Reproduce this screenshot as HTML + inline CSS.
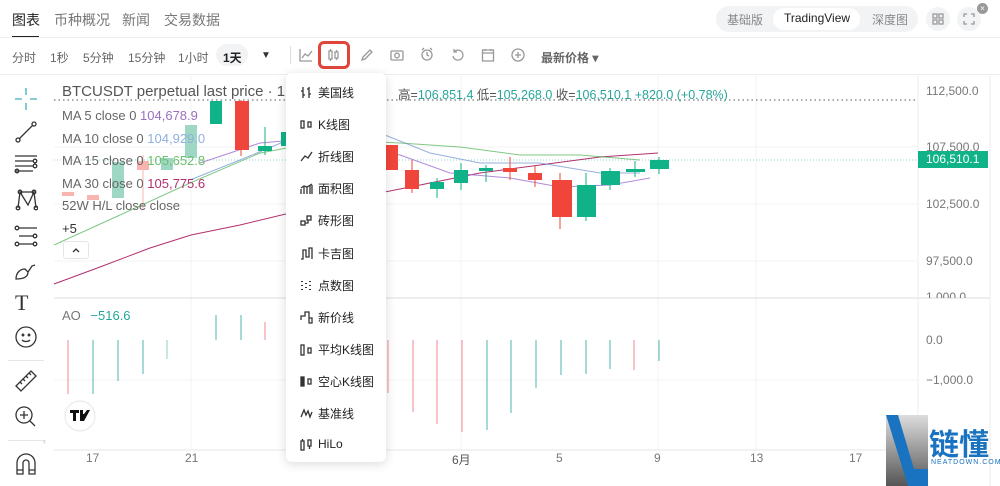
<!DOCTYPE html>
<html><head><meta charset="utf-8"><style>
*{margin:0;padding:0;box-sizing:border-box}
body{width:1000px;height:486px;overflow:hidden;background:#fff;font-family:"Liberation Sans","Noto Sans CJK SC",sans-serif;position:relative;color:#333}
.a{position:absolute;white-space:nowrap}
.tab{font-size:14px;color:#777;top:10px}
.tf{font-size:12px;color:#666;top:49px}
.lg{font-size:13px;color:#666}
.menu{position:absolute;left:286px;top:73px;width:100px;height:389px;background:#fff;border-radius:6px;box-shadow:0 2px 10px rgba(0,0,0,.15)}
.mi{position:absolute;left:14px;font-size:12px;color:#222;display:flex;align-items:center}
.mi svg{margin-right:5px}
.ax{font-size:12px;color:#777}
svg.i{position:absolute;fill:none;stroke:#333;stroke-width:1.3}
svg.t{position:absolute;fill:none;stroke:#999;stroke-width:1.3}
</style></head><body>
<div class="a tab" style="left:12px;color:#222">图表</div>
<div class="a" style="left:12px;top:36px;width:27px;height:2px;background:#222"></div>
<div class="a tab" style="left:54px">币种概况</div>
<div class="a tab" style="left:122px">新闻</div>
<div class="a tab" style="left:164px">交易数据</div>
<div class="a" style="left:0;top:37px;width:1000px;height:1px;background:#eee"></div>
<div class="a" style="left:716px;top:6px;width:202px;height:26px;border-radius:13px;background:#f2f3f5"></div>
<div class="a" style="left:773px;top:8px;width:87px;height:22px;border-radius:11px;background:#fff"></div>
<div class="a" style="left:727px;top:11px;font-size:12px;color:#888">基础版</div>
<div class="a" style="left:784px;top:11px;font-size:12px;color:#222">TradingView</div>
<div class="a" style="left:872px;top:11px;font-size:12px;color:#888">深度图</div>
<div class="a" style="left:926px;top:7px;width:24px;height:24px;border-radius:12px;background:#f2f3f5"></div>
<svg class="t" style="left:932px;top:13px" width="12" height="12"><rect x="1" y="1" width="4" height="4"/><rect x="7" y="1" width="4" height="4"/><rect x="1" y="7" width="4" height="4"/><rect x="7" y="7" width="4" height="4"/></svg>
<div class="a" style="left:957px;top:7px;width:24px;height:24px;border-radius:12px;background:#f2f3f5"></div>
<svg class="t" style="left:963px;top:13px" width="12" height="12"><path d="M1 4V1h3M8 1h3v3M11 8v3H8M4 11H1V8"/></svg>
<div class="a" style="left:977px;top:3px;width:11px;height:11px;border-radius:6px;background:#999;color:#fff;font-size:8px;text-align:center;line-height:11px">×</div>
<div class="a tf" style="left:12px">分时</div>
<div class="a tf" style="left:50px">1秒</div>
<div class="a tf" style="left:83px">5分钟</div>
<div class="a tf" style="left:128px">15分钟</div>
<div class="a tf" style="left:178px">1小时</div>
<div class="a" style="left:216px;top:44px;width:32px;height:22px;border-radius:11px;background:#f2f3f5"></div>
<div class="a tf" style="left:223px;color:#222;font-weight:bold">1天</div>
<div class="a" style="left:261px;top:50px;font-size:10px;color:#333">▼</div>
<div class="a" style="left:290px;top:46px;width:1px;height:18px;background:#ddd"></div>
<svg class="t" style="left:299px;top:48px" width="14" height="14"><path d="M1 1v12h12M3 10l3-4 3 2 4-5"/></svg>
<div class="a" style="left:318px;top:41px;width:32px;height:28px;border:3px solid #e0453a;border-radius:6px"></div>
<svg class="t" style="left:327px;top:48px" width="14" height="14"><rect x="2" y="3" width="3" height="8"/><rect x="8" y="4" width="3" height="6"/><path d="M3.5 1v2M3.5 11v2M9.5 2v2M9.5 10v2"/></svg>
<svg class="t" style="left:360px;top:48px" width="14" height="14"><path d="M2 12l1-3 7-7 2 2-7 7z"/></svg>
<svg class="t" style="left:390px;top:48px" width="14" height="14"><rect x="1" y="3" width="12" height="9" rx="1"/><circle cx="7" cy="7.5" r="2.3"/></svg>
<svg class="t" style="left:420px;top:47px" width="14" height="15"><circle cx="7" cy="8" r="5"/><path d="M7 5v3l2 1M2 3l2-2M12 3l-2-2"/></svg>
<svg class="t" style="left:451px;top:48px" width="14" height="14"><path d="M3 4a5 5 0 1 1-1 4M3 1v3h3"/></svg>
<svg class="t" style="left:481px;top:48px" width="14" height="14"><rect x="1.5" y="2" width="11" height="11"/><path d="M1.5 5h11M4 1v2M10 1v2"/></svg>
<svg class="t" style="left:511px;top:48px" width="14" height="14"><circle cx="7" cy="7" r="6"/><path d="M7 4v6M4 7h6"/></svg>
<div class="a" style="left:541px;top:49px;font-size:12px;color:#666;font-weight:bold">最新价格 ▾</div>
<div class="a" style="left:0;top:74px;width:1000px;height:1px;background:#eee"></div>
<svg class="a" style="left:0;top:75px" width="1000" height="411">
<g stroke="#f3f3f3" stroke-width="1">
<line x1="191" y1="0" x2="191" y2="375"/><line x1="461" y1="0" x2="461" y2="375"/><line x1="658" y1="0" x2="658" y2="375"/><line x1="756" y1="0" x2="756" y2="375"/>
<line x1="54" y1="72" x2="918" y2="72"/><line x1="54" y1="129" x2="918" y2="129"/><line x1="54" y1="186" x2="918" y2="186"/><line x1="54" y1="305" x2="918" y2="305"/>
</g>
<line x1="54" y1="223" x2="990" y2="223" stroke="#ddd"/>
<line x1="54" y1="375" x2="918" y2="375" stroke="#e6e6e6"/>
<line x1="918" y1="0" x2="918" y2="411" stroke="#eee"/>
<line x1="990" y1="0" x2="990" y2="411" stroke="#eee"/>
<line x1="54" y1="25" x2="915" y2="25" stroke="#555" stroke-dasharray="1.5 3"/>
<line x1="54" y1="85" x2="918" y2="85" stroke="#26a69a" stroke-dasharray="1 2" opacity=".5"/>
<polyline fill="none" stroke="#b0306e" stroke-width="1" points="54,209 100,192 150,173 191,160 240,150 290,138 360,122 420,110 480,98 540,90 600,82 658,78"/>
<polyline fill="none" stroke="#4caf50" stroke-width="1" opacity=".7" points="54,170 120,140 190,108 260,78 330,65 400,68 460,72 520,80 580,80 640,85"/>
<polyline fill="none" stroke="#6a8fd0" stroke-width="1" opacity=".7" points="190,105 240,85 300,60 380,58 430,78 480,88 540,88 600,98 640,98"/>
<polyline fill="none" stroke="#9c6bd0" stroke-width="1" opacity=".8" points="200,88 260,68 330,62 400,80 450,98 510,103 560,112 610,110 650,103"/>
<g>
<rect x="62" y="117" width="12" height="4" fill="#f8b4ae"/>
<rect x="87" y="120" width="12" height="5" fill="#f8b4ae"/>
<rect x="112" y="87" width="12" height="36" fill="#9ed8c4"/>
<rect x="137" y="86" width="12" height="9" fill="#f8b4ae"/><line x1="143" y1="80" x2="143" y2="135" stroke="#f8b4ae"/>
<rect x="161" y="83" width="12" height="12" fill="#9ed8c4"/>
<rect x="185" y="50" width="12" height="33" fill="#9ed8c4"/>
<rect x="210" y="26" width="12" height="23" fill="#0fb387"/>
<line x1="241" y1="25" x2="241" y2="81" stroke="#f0453a"/><rect x="235" y="26" width="14" height="49" fill="#f0453a"/>
<line x1="265" y1="52" x2="265" y2="80" stroke="#0fb387"/><rect x="258" y="71" width="14" height="5" fill="#0fb387"/>
<rect x="281" y="57" width="6" height="14" fill="#0fb387"/>
<rect x="386" y="70" width="12" height="25" fill="#f0453a"/>
<line x1="412" y1="85" x2="412" y2="118" stroke="#f0453a"/><rect x="405" y="95" width="14" height="19" fill="#f0453a"/>
<line x1="437" y1="103" x2="437" y2="123" stroke="#0fb387"/><rect x="430" y="107" width="14" height="7" fill="#0fb387"/>
<line x1="461" y1="88" x2="461" y2="115" stroke="#0fb387"/><rect x="454" y="95" width="14" height="13" fill="#0fb387"/>
<line x1="486" y1="90" x2="486" y2="107" stroke="#0fb387"/><rect x="479" y="93" width="14" height="3" fill="#0fb387"/>
<line x1="510" y1="82" x2="510" y2="105" stroke="#f0453a"/><rect x="503" y="93" width="14" height="4" fill="#f0453a"/>
<line x1="535" y1="90" x2="535" y2="112" stroke="#f0453a"/><rect x="528" y="98" width="14" height="7" fill="#f0453a"/>
<line x1="560" y1="98" x2="560" y2="154" stroke="#f0453a"/><rect x="552" y="105" width="20" height="37" fill="#f0453a"/>
<line x1="586" y1="98" x2="586" y2="146" stroke="#0fb387"/><rect x="577" y="110" width="19" height="32" fill="#0fb387"/>
<line x1="610" y1="93" x2="610" y2="115" stroke="#0fb387"/><rect x="601" y="96" width="19" height="14" fill="#0fb387"/>
<line x1="635" y1="86" x2="635" y2="102" stroke="#0fb387"/><rect x="626" y="94" width="19" height="3" fill="#0fb387"/>
<line x1="659" y1="82" x2="659" y2="99" stroke="#0fb387"/><rect x="650" y="85" width="19" height="9" fill="#0fb387"/>
</g>
<g stroke-width="1">
<line x1="68" y1="265" x2="68" y2="319" stroke="#f08a90"/>
<line x1="93" y1="265" x2="93" y2="319" stroke="#4db6ac"/>
<line x1="118" y1="265" x2="118" y2="306" stroke="#4db6ac"/>
<line x1="143" y1="265" x2="143" y2="299" stroke="#4db6ac"/>
<line x1="167" y1="265" x2="167" y2="284" stroke="#8fd0c6"/>
<line x1="216" y1="240" x2="216" y2="265" stroke="#4db6ac"/>
<line x1="241" y1="240" x2="241" y2="265" stroke="#4db6ac"/>
<line x1="265" y1="247" x2="265" y2="265" stroke="#f08a90"/>
<line x1="388" y1="265" x2="388" y2="318" stroke="#f08a90"/>
<line x1="413" y1="265" x2="413" y2="337" stroke="#f08a90"/>
<line x1="437" y1="265" x2="437" y2="349" stroke="#f08a90"/>
<line x1="462" y1="265" x2="462" y2="357" stroke="#f08a90"/>
<line x1="487" y1="265" x2="487" y2="355" stroke="#4db6ac"/>
<line x1="511" y1="265" x2="511" y2="338" stroke="#4db6ac"/>
<line x1="536" y1="265" x2="536" y2="313" stroke="#4db6ac"/>
<line x1="561" y1="265" x2="561" y2="300" stroke="#4db6ac"/>
<line x1="586" y1="265" x2="586" y2="299" stroke="#4db6ac"/>
<line x1="610" y1="265" x2="610" y2="294" stroke="#4db6ac"/>
<line x1="634" y1="265" x2="634" y2="295" stroke="#f08a90"/>
<line x1="659" y1="265" x2="659" y2="286" stroke="#4db6ac"/>
</g>
<circle cx="80" cy="341" r="15" fill="#fff" stroke="#e6e6e6"/>
<path d="M70 335h9v3h-3v8h-3v-8h-3z M80 335h3v4h1l3-4h3l-6 11h-4z" fill="#111"/>
</svg>
<div class="a" style="left:62px;top:83px;font-size:15px;color:#555">BTCUSDT perpetual last price · 1</div>
<div class="a" style="left:398px;top:84px;font-size:12.5px;color:#555">高=<span style="color:#26a69a">106,851.4</span> 低=<span style="color:#26a69a">105,268.0</span> 收=<span style="color:#26a69a">106,510.1</span> <span style="color:#26a69a">+820.0 (+0.78%)</span></div>
<div class="a lg" style="left:62px;top:108px">MA 5 close 0 <span style="color:#9a6fc0">104,678.9</span></div>
<div class="a lg" style="left:62px;top:131px">MA 10 close 0 <span style="color:#8fb0e0">104,929.0</span></div>
<div class="a lg" style="left:62px;top:153px">MA 15 close 0 <span style="color:#6cbf6c">105,652.8</span></div>
<div class="a lg" style="left:62px;top:176px">MA 30 close 0 <span style="color:#b0306e">105,775.6</span></div>
<div class="a lg" style="left:62px;top:198px">52W H/L close close</div>
<div class="a lg" style="left:62px;top:221px;color:#333">+5</div>
<div class="a" style="left:63px;top:241px;width:26px;height:18px;border:1px solid #e6e6e6;border-radius:3px"></div>
<svg class="i" style="left:71px;top:246px" width="10" height="8"><path d="M2 6l3-3 3 3"/></svg>
<div class="a" style="left:62px;top:308px;font-size:13px;color:#777">AO <span style="color:#26a69a;margin-left:6px">−516.6</span></div>
<div class="a ax" style="left:926px;top:84px">112,500.0</div>
<div class="a ax" style="left:926px;top:140px">107,500.0</div>
<div class="a" style="left:918px;top:151px;width:70px;height:17px;background:#0fb387;color:#fff;font-size:12px;padding-left:8px;line-height:17px">106,510.1</div>
<div class="a ax" style="left:926px;top:197px">102,500.0</div>
<div class="a ax" style="left:926px;top:254px">97,500.0</div>
<div class="a ax" style="left:926px;top:290px;height:8px;overflow:hidden">1,000.0</div>
<div class="a ax" style="left:926px;top:333px">0.0</div>
<div class="a ax" style="left:926px;top:373px">−1,000.0</div>
<div class="a ax" style="left:86px;top:451px">17</div>
<div class="a ax" style="left:185px;top:451px">21</div>
<div class="a ax" style="left:452px;top:451px;color:#555">6月</div>
<div class="a ax" style="left:556px;top:451px">5</div>
<div class="a ax" style="left:654px;top:451px">9</div>
<div class="a ax" style="left:750px;top:451px">13</div>
<div class="a ax" style="left:849px;top:451px">17</div>
<!-- left toolbar -->
<div class="a" style="left:0;top:75px;width:50px;height:411px;background:#fff"></div>
<svg class="i" style="left:14px;top:87px;stroke:#3cb0b8" width="24" height="24"><path d="M12 1v7M12 16v7M1 12h7M16 12h7"/></svg>
<svg class="i" style="left:14px;top:120px" width="24" height="24"><path d="M5 19L19 5"/><circle cx="4" cy="20" r="2"/><circle cx="20" cy="4" r="2"/></svg>
<svg class="i" style="left:14px;top:152px" width="24" height="24"><path d="M1 4h22M1 9h18M1 14h18M1 19h18"/><circle cx="21" cy="9" r="1.8"/><circle cx="21" cy="14" r="1.8"/><circle cx="3" cy="19" r="1.8"/></svg>
<svg class="i" style="left:14px;top:188px" width="24" height="24"><path d="M4 20L6 4l8 13 6-13 2 16M6 4l14 0"/><circle cx="4" cy="20" r="1.8"/><circle cx="6" cy="4" r="1.8"/><circle cx="20" cy="4" r="1.8"/><circle cx="22" cy="20" r="1.8"/></svg>
<svg class="i" style="left:14px;top:224px" width="24" height="24"><path d="M5 4h18M5 12h14M5 20h14"/><circle cx="3" cy="4" r="1.8"/><circle cx="21" cy="12" r="1.8"/><circle cx="3" cy="20" r="1.8"/><circle cx="21" cy="20" r="1.8"/></svg>
<svg class="i" style="left:14px;top:259px" width="24" height="24"><path d="M2 20c0-6 4-10 9-10l3 3c0 5-5 7-12 7zM14 13l4-6 3-1"/></svg>
<div class="a" style="left:15px;top:290px;font-size:22px;color:#333;font-family:'Liberation Serif'">T</div>
<svg class="i" style="left:14px;top:325px" width="24" height="24"><circle cx="12" cy="12" r="10"/><circle cx="9" cy="10" r=".8"/><circle cx="15" cy="10" r=".8"/><path d="M8 15c2 2 6 2 8 0"/></svg>
<div class="a" style="left:8px;top:360px;width:36px;height:1px;background:#e6e6e6"></div>
<svg class="i" style="left:14px;top:369px" width="24" height="24"><path d="M2 17L17 2l5 5L7 22zM6 13l2 2M9 10l2 2M12 7l2 2M15 4l2 2"/></svg>
<svg class="i" style="left:14px;top:405px" width="24" height="24"><circle cx="10" cy="10" r="8"/><path d="M16 16l5 5M10 6v8M6 10h8"/></svg>
<div class="a" style="left:8px;top:440px;width:36px;height:1px;background:#e6e6e6"></div>
<svg class="i" style="left:14px;top:452px" width="24" height="24"><path d="M3 22V11a9 9 0 0 1 18 0v11h-6V11a3 3 0 0 0-6 0v11zM3 18h6M15 18h6"/></svg>
<div class="a" style="left:43px;top:436px;font-size:9px;color:#bbb">‹</div>
<!-- menu -->
<div class="menu">
<div class="mi" style="top:11px"><svg class="i" width="13" height="13" style="position:static"><path d="M3 1v11M1 5h2M3 9h2M9 1v11M7 3h2M9 8h2"/></svg>美国线</div>
<div class="mi" style="top:43px"><svg class="i" width="13" height="13" style="position:static"><rect x="1" y="3" width="3" height="7"/><rect x="8" y="4" width="3" height="5"/></svg>K线图</div>
<div class="mi" style="top:75px"><svg class="i" width="13" height="13" style="position:static"><path d="M1 11l4-5 3 2 4-6"/></svg>折线图</div>
<div class="mi" style="top:107px"><svg class="i" width="13" height="13" style="position:static"><path d="M1 12V7M4 12V5M7 12V5M10 12V3M12 12V3M1 6l3-2 3 1 5-3"/></svg>面积图</div>
<div class="mi" style="top:139px"><svg class="i" width="13" height="13" style="position:static"><rect x="1" y="7" width="4" height="4"/><rect x="7" y="2" width="4" height="4"/><path d="M5 9h3V6"/></svg>砖形图</div>
<div class="mi" style="top:172px"><svg class="i" width="13" height="13" style="position:static"><path d="M1 12h2V3h3v7h3V1h3v11"/></svg>卡吉图</div>
<div class="mi" style="top:204px"><svg class="i" width="13" height="13" style="position:static;stroke-width:2"><path d="M2 2v1M2 6v1M2 10v1M6 4v1M6 8v1M10 2v1M10 6v1M10 10v1"/></svg>点数图</div>
<div class="mi" style="top:236px"><svg class="i" width="13" height="13" style="position:static"><path d="M1 9V5h4V1h4v11h3V7h-3"/></svg>新价线</div>
<div class="mi" style="top:268px"><svg class="i" width="13" height="13" style="position:static"><rect x="1" y="2" width="3" height="10"/><rect x="8" y="5" width="3" height="5"/></svg>平均K线图</div>
<div class="mi" style="top:300px"><svg class="i" width="13" height="13" style="position:static"><rect x="1" y="2" width="3" height="9" fill="#333"/><rect x="8" y="4" width="3" height="5"/></svg>空心K线图</div>
<div class="mi" style="top:332px"><svg class="i" width="13" height="13" style="position:static"><path d="M1 10l3-7 2 5 2-4 2 6 2-5"/></svg>基准线</div>
<div class="mi" style="top:364px"><svg class="i" width="13" height="13" style="position:static"><rect x="1" y="3" width="3" height="9"/><rect x="8" y="2" width="3" height="6"/><path d="M2.5 1v2M9.5 8v3"/></svg>HiLo</div>
</div>
<!-- watermark -->
<svg class="a" style="left:886px;top:415px" width="42" height="71"><defs><linearGradient id="g" x1="0" y1="0" x2="0" y2="1"><stop offset="0" stop-color="#ddd"/><stop offset="1" stop-color="#555"/></linearGradient></defs><rect x="0" y="0" width="42" height="71" fill="url(#g)"/><polygon points="0,0 12,0 28,54 42,54 42,71 22,71" fill="#1a73c0"/></svg>
<div class="a" style="left:929px;top:420px;font-size:30px;color:#1a73c0;font-weight:bold">链懂</div>
<div class="a" style="left:931px;top:459px;font-size:7px;color:#1a73c0;letter-spacing:1px">NEATDOWN.COM</div>
</body></html>
